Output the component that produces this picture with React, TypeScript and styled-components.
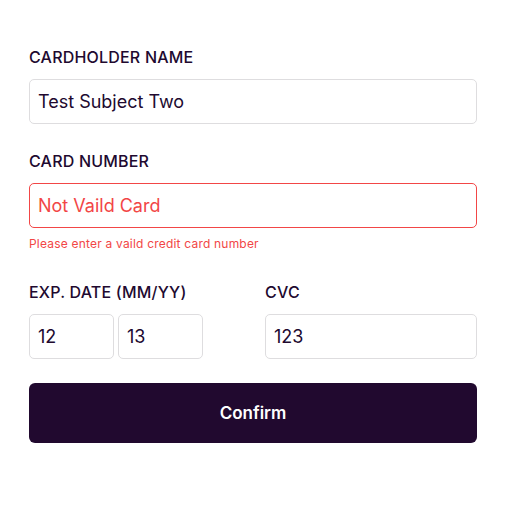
import styled, { createGlobalStyle } from 'styled-components';

const GlobalStyle = createGlobalStyle`
  body {
    margin: 0;
    background: #ffffff;
    font-family: "Inter", "Liberation Sans", sans-serif;
  }
`;

const Form = styled.form`
  width: 448px;
  padding: 47px 0 0 29px;
  display: flex;
  flex-direction: column;
`;

const Field = styled.div<{ $gap?: number }>`
  display: flex;
  flex-direction: column;
  margin-bottom: ${(p) => p.$gap ?? 27}px;
`;

const Label = styled.label`
  font-size: 16px;
  font-weight: 500;
  line-height: 20px;
  color: #21092f;
  text-transform: uppercase;
  letter-spacing: 0.2px;
  margin-bottom: 12px;
`;

const Input = styled.input<{ $error?: boolean; $width?: number }>`
  box-sizing: border-box;
  height: 45px;
  width: ${(p) => (p.$width ? `${p.$width}px` : '100%')};
  border: 1px solid ${(p) => (p.$error ? '#f24646' : '#dedddf')};
  border-radius: 5px;
  padding: 0 8px;
  font-family: inherit;
  font-size: 18px;
  color: ${(p) => (p.$error ? '#f24646' : '#21092f')};
  background: #fff;
  outline: none;
`;

const ErrorText = styled.span`
  margin-top: 9px;
  font-size: 12px;
  line-height: 14px;
  letter-spacing: 0.2px;
  color: #f24646;
`;

const Row = styled.div`
  display: grid;
  grid-template-columns: 1fr 1fr;
  column-gap: 24px;
  margin-top: 31px;
  margin-bottom: 24px;
`;

const DateInputs = styled.div`
  display: flex;
  gap: 4px;
`;

const Button = styled.button`
  height: 60px;
  border: none;
  border-radius: 6px;
  background: #21092f;
  color: #ffffff;
  font-family: inherit;
  font-size: 17px;
  font-weight: 600;
`;

export default function App() {
  return (
    <>
      <GlobalStyle />
      <Form onSubmit={(e) => e.preventDefault()}>
        <Field>
          <Label>Cardholder Name</Label>
          <Input defaultValue="Test Subject Two" />
        </Field>
        <Field $gap={0}>
          <Label>Card Number</Label>
          <Input $error defaultValue="Not Vaild Card" />
          <ErrorText>Please enter a vaild credit card number</ErrorText>
        </Field>
        <Row>
          <Field $gap={0}>
            <Label>Exp. Date (MM/YY)</Label>
            <DateInputs>
              <Input $width={85} defaultValue="12" />
              <Input $width={85} defaultValue="13" />
            </DateInputs>
          </Field>
          <Field $gap={0}>
            <Label>CVC</Label>
            <Input defaultValue="123" />
          </Field>
        </Row>
        <Button type="submit">Confirm</Button>
      </Form>
    </>
  );
}
